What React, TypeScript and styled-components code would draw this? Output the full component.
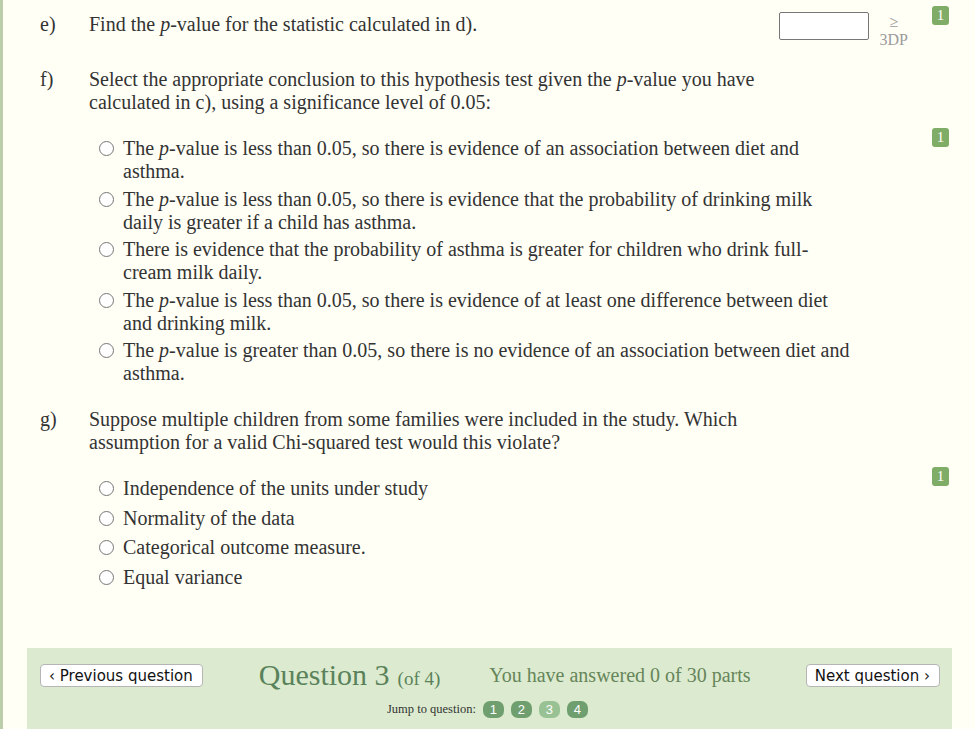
import React from "react";
import styled, { createGlobalStyle } from "styled-components";

const Global = createGlobalStyle`
  html, body { margin: 0; padding: 0; background: #fffff6; }
  body { font-family: "Liberation Serif", "Times New Roman", serif; color: #333; }
`;

const Page = styled.div`
  width: 975px;
  height: 729px;
  overflow: hidden;
  box-sizing: border-box;
  border-left: 3px solid #bccdac;
  background: #fffff6;
  display: flex;
  flex-direction: column;
`;

const Part = styled.div<{ $top: number }>`
  display: grid;
  grid-template-columns: 86px 1fr 70px;
  margin-top: ${(p) => p.$top}px;
`;

const Label = styled.div`
  padding-left: 37px;
  font-size: 20px;
  line-height: 23px;
`;

const Body = styled.div`
  font-size: 20px;
  line-height: 23px;
`;

const Prompt = styled.div<{ $w?: number }>`
  max-width: ${(p) => p.$w ?? 700}px;
`;

const InlineRow = styled.div`
  display: flex;
  align-items: flex-start;
  margin-right: -3px;
`;

const Answer = styled.input`
  width: 90px;
  height: 28px;
  box-sizing: border-box;
  border: 1px solid #777;
  border-radius: 2px;
  background: #fff;
  margin: -1px 0 0 0;
`;

const Precision = styled.div`
  display: flex;
  flex-direction: column;
  align-items: center;
  margin: 0 0 0 11px;
  color: #9b9b9b;
  font-size: 16px;
  line-height: 18px;
`;

const Side = styled.div<{ $pt: number }>`
  padding-top: ${(p) => p.$pt}px;
  display: flex;
  align-items: flex-start;
  padding-left: 27px;
`;

const Mark = styled.span`
  display: inline-flex;
  align-items: center;
  justify-content: center;
  width: 17px;
  height: 19px;
  border-radius: 3px;
  background: #7fac66;
  color: #fff;
  font-size: 15px;
  line-height: 19px;
`;

const Options = styled.div<{ $top: number; $gap: number }>`
  margin-top: ${(p) => p.$top}px;
  display: flex;
  flex-direction: column;
  gap: ${(p) => p.$gap}px;
  padding-left: 9px;
`;

const Option = styled.label`
  display: flex;
  align-items: flex-start;
`;

const OptionText = styled.span`
  max-width: 730px;
`;

const Radio = styled.span`
  flex: none;
  width: 13px;
  height: 13px;
  border: 1.5px solid #767676;
  border-radius: 50%;
  margin: 4px 9px 0 1px;
  background: #fff;
`;

const Footer = styled.div`
  margin: auto 23px 0 24px;
  height: 81px;
  background: #dcebcf;
  display: flex;
  flex-direction: column;
  padding: 16px 12px 0 13px;
  box-sizing: border-box;
`;

const NavRow = styled.div`
  display: flex;
  align-items: center;
  height: 23px;
`;

const NavButton = styled.button`
  font-family: "DejaVu Sans", Verdana, sans-serif;
  font-size: 15px;
  color: #111;
  background: #fff;
  border: 1px solid #b5b5b5;
  border-radius: 4px;
  height: 23px;
  padding: 0 9px 0 8px;
  line-height: 20px;
`;

const Title = styled.div`
  margin-left: 56px;
  color: #5a825a;
  font-size: 30px;
  line-height: 23px;
  display: flex;
  align-items: baseline;
  gap: 8px;
  transform: translateY(1px);
`;

const Of = styled.span`
  font-size: 19px;
`;

const Progress = styled.div`
  margin-left: 49px;
  color: #66855a;
  font-size: 20px;
  flex: 1;
`;

const JumpRow = styled.div`
  display: flex;
  align-items: center;
  margin-top: 14px;
  margin-left: 347px;
  font-size: 12.5px;
  color: #333;
  gap: 7px;
`;

const Jump = styled.span<{ $current?: boolean }>`
  display: inline-flex;
  align-items: center;
  justify-content: center;
  width: 21px;
  height: 17px;
  border-radius: 7px;
  background: ${(p) => (p.$current ? "#99c294" : "#6f9e6f")};
  color: #fff;
  font-family: "Liberation Sans", Arial, sans-serif;
  font-size: 13px;
`;

const P = () => <i>p</i>;

const fOptions: React.ReactNode[] = [
  <>The <P />-value is less than 0.05, so there is evidence of an association between diet and asthma.</>,
  <>The <P />-value is less than 0.05, so there is evidence that the probability of drinking milk daily is greater if a child has asthma.</>,
  <>There is evidence that the probability of asthma is greater for children who drink full-cream milk daily.</>,
  <>The <P />-value is less than 0.05, so there is evidence of at least one difference between diet and drinking milk.</>,
  <>The <P />-value is greater than 0.05, so there is no evidence of an association between diet and asthma.</>,
];

const gOptions = [
  "Independence of the units under study",
  "Normality of the data",
  "Categorical outcome measure.",
  "Equal variance",
];

export default function App() {
  return (
    <>
      <Global />
      <Page>
        <Part $top={13}>
          <Label>e)</Label>
          <Body>
            <InlineRow>
              <Prompt $w={690} style={{ flex: 1 }}>
                Find the <P />-value for the statistic calculated in d).
              </Prompt>
              <Answer aria-label="answer" />
              <Precision>
                <span>≥</span>
                <span>3DP</span>
              </Precision>
            </InlineRow>
          </Body>
          <Side $pt={0}>
            <Mark style={{ marginTop: -7 }}>1</Mark>
          </Side>
        </Part>

        <Part $top={19}>
          <Label>f)</Label>
          <Body>
            <Prompt $w={700}>
              Select the appropriate conclusion to this hypothesis test given the <P />-value you have calculated in c), using a significance level of 0.05:
            </Prompt>
            <Options $top={23} $gap={4.5}>
              {fOptions.map((o, i) => (
                <Option key={i}>
                  <Radio />
                  <OptionText>{o}</OptionText>
                </Option>
              ))}
            </Options>
          </Body>
          <Side $pt={60}>
            <Mark>1</Mark>
          </Side>
        </Part>

        <Part $top={23}>
          <Label>g)</Label>
          <Body>
            <Prompt $w={700}>
              Suppose multiple children from some families were included in the study. Which assumption for a valid Chi-squared test would this violate?
            </Prompt>
            <Options $top={23} $gap={6.5}>
              {gOptions.map((o) => (
                <Option key={o}>
                  <Radio />
                  <OptionText>{o}</OptionText>
                </Option>
              ))}
            </Options>
          </Body>
          <Side $pt={59}>
            <Mark>1</Mark>
          </Side>
        </Part>

        <Footer>
          <NavRow>
            <NavButton>‹ Previous question</NavButton>
            <Title>
              <span>Question 3</span>
              <Of>(of 4)</Of>
            </Title>
            <Progress>You have answered 0 of 30 parts</Progress>
            <NavButton>Next question ›</NavButton>
          </NavRow>
          <JumpRow>
            <span>Jump to question:</span>
            <Jump>1</Jump>
            <Jump>2</Jump>
            <Jump $current>3</Jump>
            <Jump>4</Jump>
          </JumpRow>
        </Footer>
      </Page>
    </>
  );
}
